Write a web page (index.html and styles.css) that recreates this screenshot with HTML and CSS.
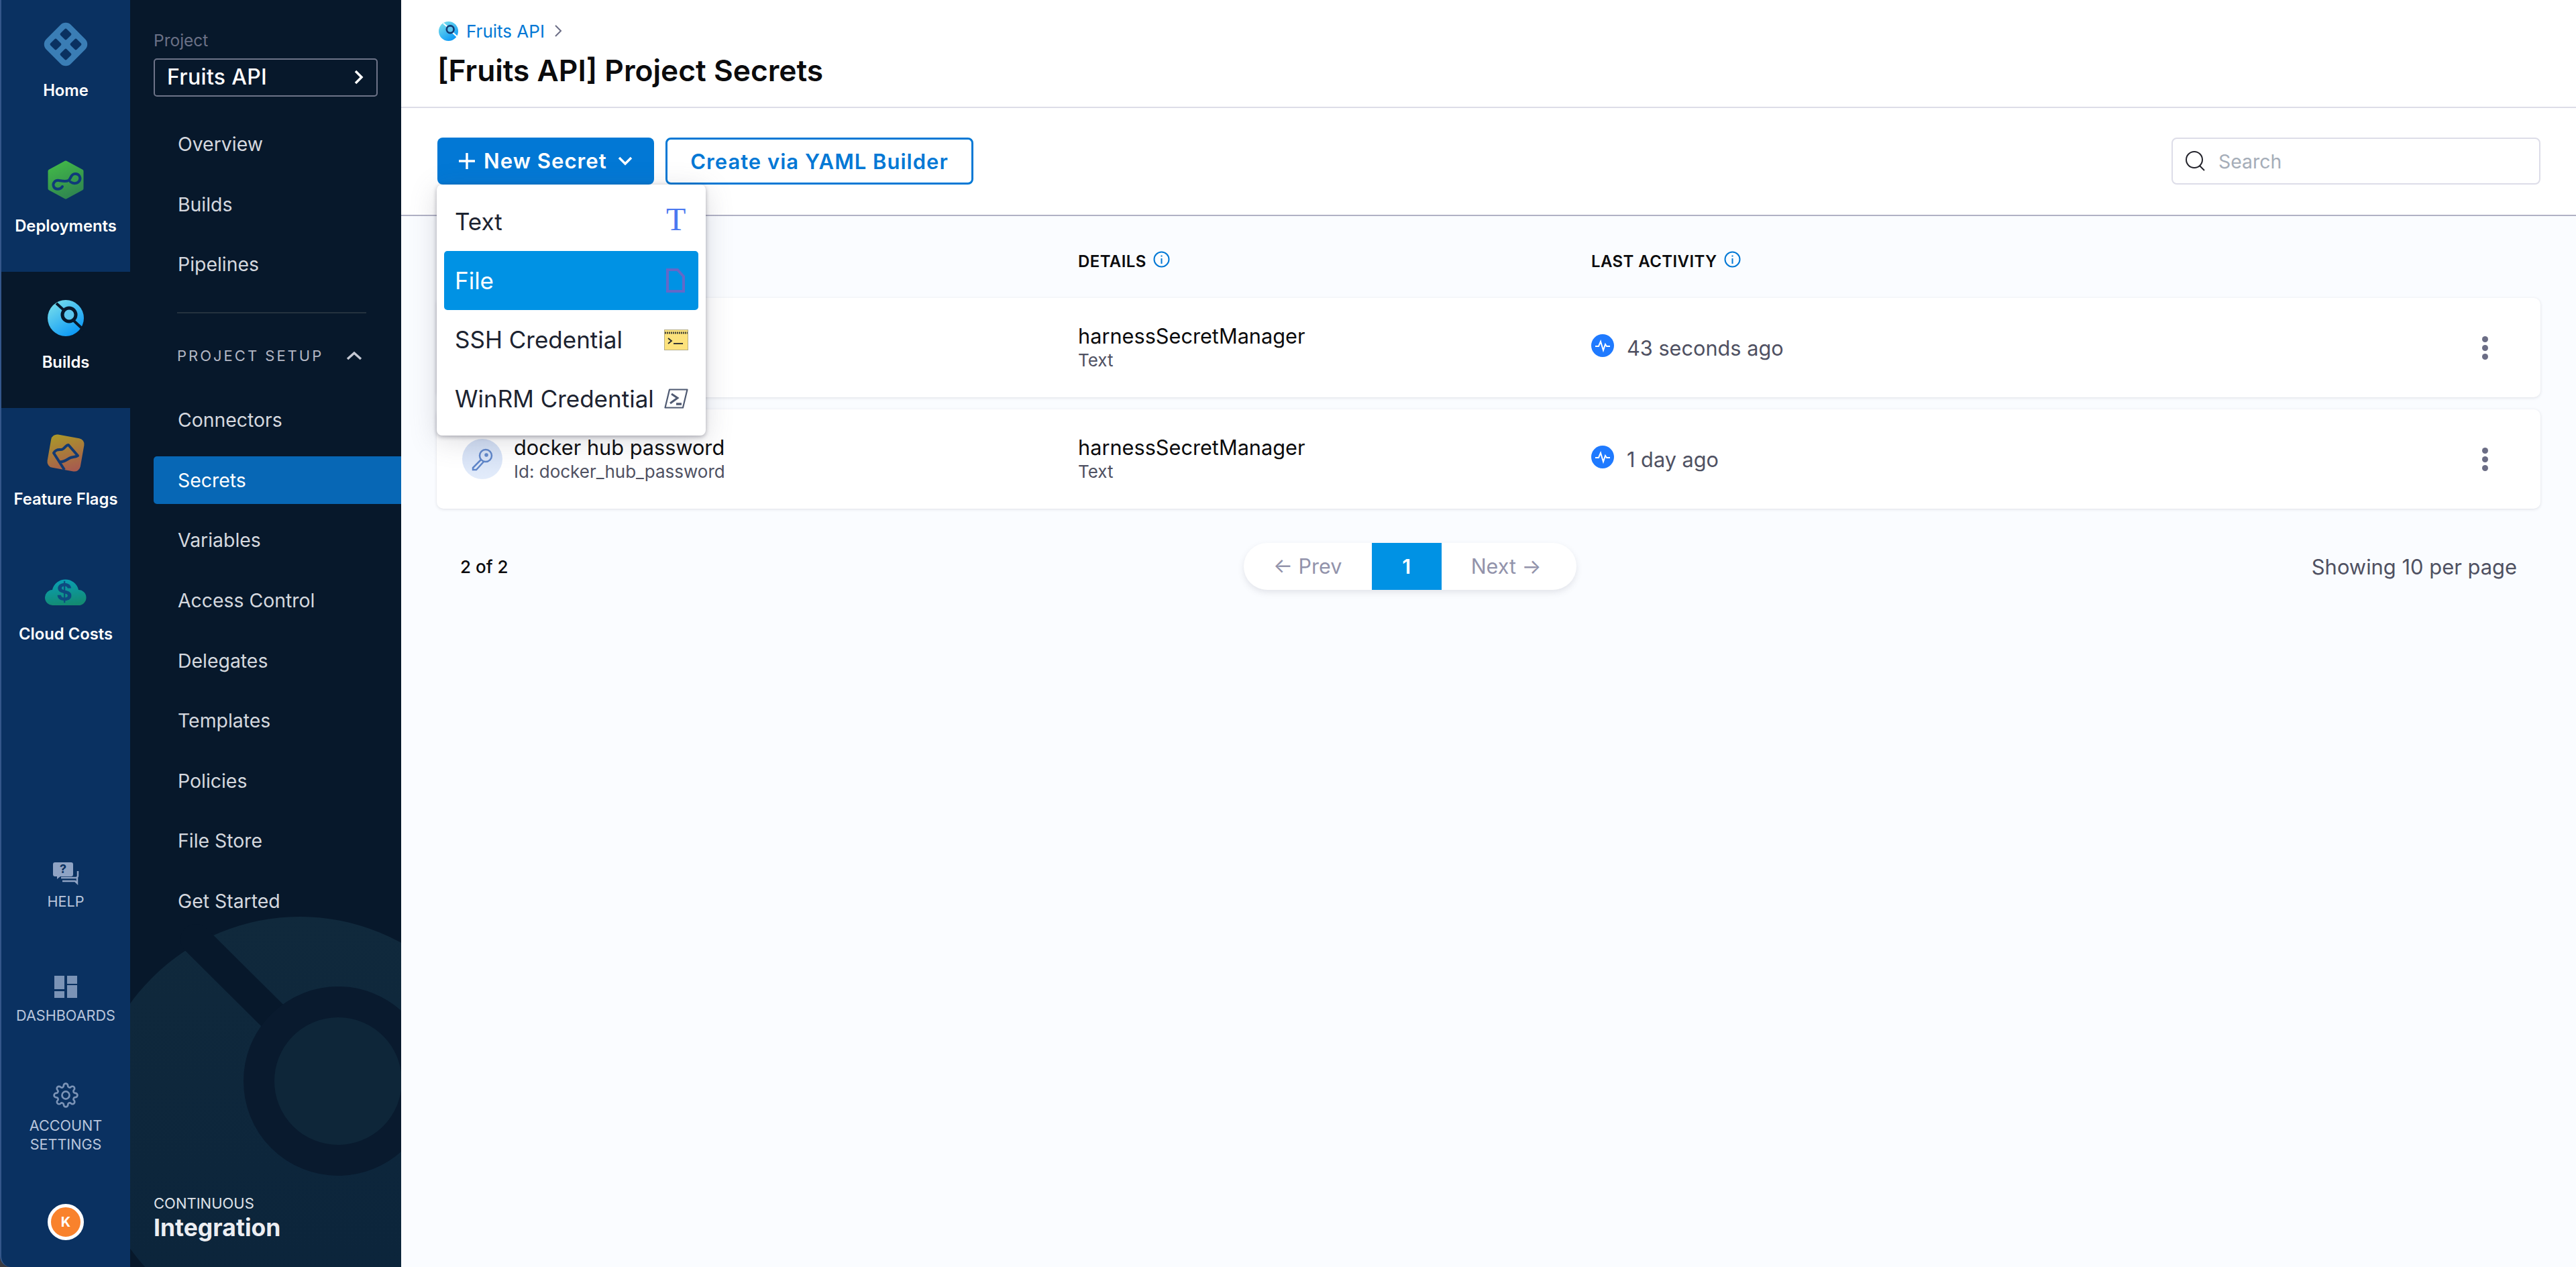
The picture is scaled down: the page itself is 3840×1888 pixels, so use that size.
FILE: index.html
```html
<!DOCTYPE html>
<html lang="en">
<head>
    <meta charset="UTF-8">
    <meta name="viewport" content="width=device-width, initial-scale=1.0">
    <title>Project Secrets</title>
    <link rel="stylesheet" href="styles.css">
</head>
<body>
    <aside class="rail">
        <a class="module">
            <svg class="module-icon" width="66" height="66" viewBox="0 0 66 66">
                <rect x="7" y="7" width="52" height="52" rx="11" fill="#3a7db5" transform="rotate(45 33 33)"/>
                <g fill="#0a3161">
                    <rect x="26.5" y="11.5" width="13" height="13" rx="2" transform="rotate(45 33 18)"/>
                    <rect x="26.5" y="41.5" width="13" height="13" rx="2" transform="rotate(45 33 48)"/>
                    <rect x="11.5" y="26.5" width="13" height="13" rx="2" transform="rotate(45 18 33)"/>
                    <rect x="41.5" y="26.5" width="13" height="13" rx="2" transform="rotate(45 48 33)"/>
                </g>
            </svg>
            <span>Home</span>
        </a>
        <a class="module">
            <svg class="module-icon" width="54" height="58" viewBox="0 0 54 58">
                <defs><linearGradient id="green" x1="0.3" y1="0" x2="0.7" y2="1"><stop offset="0" stop-color="#41b648"/><stop offset="1" stop-color="#2f8450"/></linearGradient></defs>
                <path d="M27 3 L51 16 V42 L27 55 L3 42 V16 Z" fill="url(#green)" stroke="url(#green)" stroke-width="5" stroke-linejoin="round"/>
                <path d="M22 39c-3 5-11 5-13 0s2-10 8-9 10 2 14 0 3-10 10-10 9 7 6 11-9 4-13 1" fill="none" stroke="#0f3a7a" stroke-width="4" stroke-linecap="round"/>
            </svg>
            <span>Deployments</span>
        </a>
        <a class="module active">
            <svg class="module-icon" width="54" height="54" viewBox="0 0 54 54">
                <defs><linearGradient id="cyan" x1="0.1" y1="0.1" x2="0.7" y2="1"><stop offset="0" stop-color="#74dcec"/><stop offset="1" stop-color="#0a98f6"/></linearGradient></defs>
                <circle cx="27" cy="27" r="27" fill="url(#cyan)"/>
                <path d="M13 5 L24 15 M38 30 L54 45" stroke="#07182b" stroke-width="4"/>
                <circle cx="32" cy="22" r="10" fill="#5cc6ee" stroke="#07182b" stroke-width="5"/>
            </svg>
            <span>Builds</span>
        </a>
        <a class="module">
            <svg class="module-icon" width="58" height="58" viewBox="0 0 58 58">
                <defs><linearGradient id="amber" x1="0.2" y1="0" x2="0.7" y2="1"><stop offset="0" stop-color="#aa962a"/><stop offset="1" stop-color="#a75c4e"/></linearGradient></defs>
                <rect x="4" y="4" width="50" height="50" rx="9" fill="url(#amber)" transform="rotate(10 29 29)"/>
                <path d="M27 54 L11 29 c5-8 10-3 14-6 s6-7 8-6 l14 16 c-5 3-8 1-13 4 s-9 6-15 5" fill="none" stroke="#123a72" stroke-width="4" stroke-linejoin="round"/>
            </svg>
            <span>Feature Flags</span>
        </a>
        <a class="module">
            <svg class="module-icon" width="62" height="44" viewBox="0 0 62 44">
                <defs><linearGradient id="teal" x1="0.4" y1="0" x2="0.6" y2="1"><stop offset="0" stop-color="#0a9fb4"/><stop offset="1" stop-color="#138a70"/></linearGradient></defs>
                <path d="M12 43 A11.500 11.500 0 0 1 11 20 A20 20 0 0 1 50 20 A11.500 11.500 0 0 1 50 43 Z" fill="url(#teal)"/>
                <text x="29" y="36" text-anchor="middle" class="cloud-dollar">$</text>
            </svg>
            <span>Cloud Costs</span>
        </a>

        <div class="rail-bottom">
            <a class="tool tool-help">
                <svg width="40" height="36" viewBox="0 0 40 36">
                    <path d="M13 24 H35 a3 3 0 0 0 3-3 V14" fill="none" stroke="#8fa3c4" stroke-width="2.500"/>
                    <path d="M15 29 H34 l3 3 V24" fill="none" stroke="#8fa3c4" stroke-width="2.500"/>
                    <path d="M4 1 H28 a3 3 0 0 1 3 3 V19 a3 3 0 0 1-3 3 H12 l-5 4 V22 H4 a3 3 0 0 1-3-3 V4 a3 3 0 0 1 3-3 Z" fill="#8fa3c4"/>
                    <text x="16" y="17" text-anchor="middle" class="help-mark">?</text>
                </svg>
                <span>HELP</span>
            </a>
            <a class="tool tool-dash">
                <svg width="34" height="33" viewBox="0 0 34 33" fill="#7b93b6">
                    <rect width="15" height="20"/><rect x="19" width="15" height="12"/>
                    <rect y="23" width="15" height="10"/><rect x="19" y="14" width="15" height="19"/>
                </svg>
                <span>DASHBOARDS</span>
            </a>
            <a class="tool tool-gear">
                <svg width="38" height="38" viewBox="0 0 24 24" fill="none" stroke="#7b93b6" stroke-width="1.700">
                    <circle cx="12" cy="12" r="3.500"/>
                    <path d="M19.4 15a1.65 1.65 0 0 0 .33 1.82l.06.06a2 2 0 0 1 0 2.83 2 2 0 0 1-2.83 0l-.06-.06a1.65 1.65 0 0 0-1.82-.33 1.65 1.65 0 0 0-1 1.51V21a2 2 0 0 1-2 2 2 2 0 0 1-2-2v-.09A1.65 1.65 0 0 0 9 19.4a1.65 1.65 0 0 0-1.82.33l-.06.06a2 2 0 0 1-2.83 0 2 2 0 0 1 0-2.83l.06-.06a1.65 1.65 0 0 0 .33-1.82 1.65 1.65 0 0 0-1.51-1H3a2 2 0 0 1-2-2 2 2 0 0 1 2-2h.09A1.65 1.65 0 0 0 4.6 9a1.65 1.65 0 0 0-.33-1.82l-.06-.06a2 2 0 0 1 0-2.83 2 2 0 0 1 2.83 0l.06.06a1.65 1.65 0 0 0 1.82.33H9a1.65 1.65 0 0 0 1-1.51V3a2 2 0 0 1 2-2 2 2 0 0 1 2 2v.09a1.65 1.65 0 0 0 1 1.51 1.65 1.65 0 0 0 1.82-.33l.06-.06a2 2 0 0 1 2.83 0 2 2 0 0 1 0 2.83l-.06.06a1.65 1.65 0 0 0-.33 1.82V9a1.65 1.65 0 0 0 1.51 1H21a2 2 0 0 1 2 2 2 2 0 0 1-2 2h-.09a1.65 1.65 0 0 0-1.51 1z"/>
                </svg>
                <span>ACCOUNT<br>SETTINGS</span>
            </a>
            <div class="avatar">K</div>
        </div>
    </aside>

    <nav class="sidenav">
        <svg class="watermark" width="404" height="560" viewBox="194 1328 404 560">
            <defs><linearGradient id="mark" x1="0" y1="0" x2="0" y2="1"><stop offset="0" stop-color="#10293c"/><stop offset="1" stop-color="#0b243b"/></linearGradient></defs>
            <circle cx="447" cy="1678" r="312" fill="url(#mark)"/>
            <path d="M292 1400 L445 1552" stroke="#07182b" stroke-width="46" stroke-linecap="round"/>
            <circle cx="504" cy="1611" r="118" fill="#0e2639" stroke="#091a2e" stroke-width="46"/>
        </svg>

        <div class="project-label">Project</div>
        <div class="project-box">
            <span>Fruits API</span>
            <svg width="16" height="24" viewBox="0 0 16 24" fill="none" stroke="#fff" stroke-width="3.500"><path d="M3 3 L12 12 L3 21"/></svg>
        </div>

        <a class="nav-item first">Overview</a>
        <a class="nav-item">Builds</a>
        <a class="nav-item">Pipelines</a>
        <div class="nav-divider"></div>
        <div class="nav-section">
            <span>PROJECT SETUP</span>
            <svg width="24" height="16" viewBox="0 0 24 16" fill="none" stroke="#c5c8d3" stroke-width="3.500"><path d="M2 13 L12 4 L22 13"/></svg>
        </div>
        <a class="nav-item">Connectors</a>
        <a class="nav-item selected">Secrets</a>
        <a class="nav-item">Variables</a>
        <a class="nav-item">Access Control</a>
        <a class="nav-item">Delegates</a>
        <a class="nav-item">Templates</a>
        <a class="nav-item">Policies</a>
        <a class="nav-item">File Store</a>
        <a class="nav-item">Get Started</a>

        <div class="module-name">
            <div class="module-kicker">CONTINUOUS</div>
            <div class="module-title">Integration</div>
        </div>
    </nav>

    <main class="main">
        <header class="page-header">
            <div class="crumbs">
                <svg width="29" height="29" viewBox="0 0 54 54">
                    <defs><linearGradient id="cyan2" x1="0.1" y1="0.1" x2="0.7" y2="1"><stop offset="0" stop-color="#74dcec"/><stop offset="1" stop-color="#0a98f6"/></linearGradient></defs>
                    <circle cx="27" cy="27" r="27" fill="url(#cyan2)"/>
                    <path d="M13 5 L24 15 M38 30 L54 45" stroke="#fff" stroke-width="4"/>
                    <circle cx="32" cy="22" r="10" fill="#5cc6ee" stroke="#123a72" stroke-width="5"/>
                </svg>
                <a>Fruits API</a>
                <svg width="12" height="20" viewBox="0 0 12 20" fill="none" stroke="#6b6d85" stroke-width="2"><path d="M2 2 L10 10 L2 18"/></svg>
            </div>
            <h1>[Fruits API] Project Secrets</h1>
        </header>

        <div class="toolbar">
            <div class="new-wrap">
                <button class="btn btn-primary">
                    <svg width="30" height="30" viewBox="0 0 30 30" stroke="#fff" stroke-width="3.500"><path d="M15 3 V27 M3 15 H27"/></svg>
                    <span>New Secret</span>
                    <svg class="caret" width="22" height="14" viewBox="0 0 22 14" fill="none" stroke="#fff" stroke-width="3.500"><path d="M2 2 L11 11 L20 2"/></svg>
                </button>
                <div class="menu">
                    <div class="menu-item"><span>Text</span><span class="icon-t">T</span></div>
                    <div class="menu-item hover">
                        <span>File</span>
                        <svg class="menu-icon" width="28" height="36" viewBox="0 0 28 36" fill="none" stroke="#6468c8" stroke-width="4"><path d="M2 2 H17 L26 12 V34 H2 Z"/></svg>
                    </div>
                    <div class="menu-item">
                        <span>SSH Credential</span>
                        <svg class="menu-icon wide" width="36" height="31" viewBox="0 0 36 31">
                            <rect x="0.500" y="0.500" width="35" height="30" fill="#fce27c" stroke="#b5ad86"/>
                            <path d="M1 5 H35" stroke="#4a4a3a" stroke-width="3" stroke-dasharray="2 1"/>
                            <path d="M6 13 L11 17 L6 21" fill="none" stroke="#22262e" stroke-width="1.800"/>
                            <path d="M14 21 H28" stroke="#22262e" stroke-width="1.800"/>
                        </svg>
                    </div>
                    <div class="menu-item">
                        <span>WinRM Credential</span>
                        <svg class="menu-icon wide" width="36" height="30" viewBox="0 0 36 30" fill="none" stroke="#4f5a72">
                            <path d="M8 1.500 H34.500 L28 28.500 H1.500 Z" stroke-width="2.200" stroke-linejoin="round"/>
                            <path d="M11 8 L20 14 L9 22" stroke-width="3"/>
                            <path d="M18 23 H26" stroke-width="3.500"/>
                        </svg>
                    </div>
                </div>
            </div>
            <button class="btn btn-outline">Create via YAML Builder</button>
            <div class="search">
                <svg width="32" height="32" viewBox="0 0 32 32" fill="none" stroke="#22222a" stroke-width="2"><circle cx="14" cy="14" r="12"/><path d="M22 23 L29 30"/></svg>
                <span>Search</span>
            </div>
        </div>

        <section class="content">
            <div class="table-head">
                <div></div>
                <div class="th">DETAILS <svg width="25" height="25" viewBox="0 0 25 25"><circle cx="12.500" cy="12.500" r="11" fill="none" stroke="#0278d5" stroke-width="2"/><path d="M12.500 11 V19 M12.500 6.500 V8.500" stroke="#0278d5" stroke-width="2"/></svg></div>
                <div class="th">LAST ACTIVITY <svg width="25" height="25" viewBox="0 0 25 25"><circle cx="12.500" cy="12.500" r="11" fill="none" stroke="#0278d5" stroke-width="2"/><path d="M12.500 11 V19 M12.500 6.500 V8.500" stroke="#0278d5" stroke-width="2"/></svg></div>
            </div>

            <div class="row">
                <div class="cell-name"></div>
                <div>
                    <div class="row-title">harnessSecretManager</div>
                    <div class="row-sub">Text</div>
                </div>
                <div class="activity">
                    <svg width="34" height="34" viewBox="0 0 34 34"><circle cx="17" cy="17" r="17" fill="#1f7aff"/><path d="M6 18 H11 L14 11 L18 24 L21 15 L23 18 H28" fill="none" stroke="#fff" stroke-width="2"/></svg>
                    <span>43 seconds ago</span>
                </div>
                <div class="dots"><i></i><i></i><i></i></div>
            </div>

            <div class="row">
                <div class="cell-name">
                    <div class="key-badge">
                        <svg width="36" height="36" viewBox="0 0 36 36" fill="none" stroke="#5f86c9" stroke-width="2.500"><circle cx="23" cy="13" r="9"/><circle cx="24" cy="12" r="1.500"/><path d="M16 19 L4 31 V34 H9 L20 22"/></svg>
                    </div>
                    <div>
                        <div class="row-title">docker hub password</div>
                        <div class="row-sub">Id: docker_hub_password</div>
                    </div>
                </div>
                <div>
                    <div class="row-title">harnessSecretManager</div>
                    <div class="row-sub">Text</div>
                </div>
                <div class="activity">
                    <svg width="34" height="34" viewBox="0 0 34 34"><circle cx="17" cy="17" r="17" fill="#1f7aff"/><path d="M6 18 H11 L14 11 L18 24 L21 15 L23 18 H28" fill="none" stroke="#fff" stroke-width="2"/></svg>
                    <span>1 day ago</span>
                </div>
                <div class="dots"><i></i><i></i><i></i></div>
            </div>

            <div class="pager-row">
                <div class="pager-count">2 of 2</div>
                <div class="pager">
                    <a class="page-link prev">&larr; Prev</a>
                    <a class="page-num">1</a>
                    <a class="page-link next">Next &rarr;</a>
                </div>
                <div class="pager-size">Showing 10 per page</div>
            </div>
        </section>
    </main>
</body>
</html>
```

FILE: styles.css
```css
* {
    box-sizing: border-box;
}
html, body {
    height: 100%;
}
body {
    margin: 0;
    display: flex;
    height: 1888px;
    overflow: hidden;
    font-family: Inter, "Noto Sans", sans-serif;
    background: #3a3a3f;
    color: #0b0b0d;
}

/* module rail */
.rail {
    width: 194px;
    flex: none;
    display: flex;
    flex-direction: column;
    background: #0a3161;
    border-left: 2px solid #34568a;
    border-bottom-left-radius: 16px;
}
.module {
    height: 203px;
    display: flex;
    flex-direction: column;
    align-items: center;
    color: #fff;
    font-size: 23.800px;
    font-weight: 600;
}
.module:first-child {
    height: 202px;
}
.module.active {
    background: #07182b;
}
.module-icon {
    height: 66px;
    margin-top: 33px;
    margin-bottom: 21px;
}
.module:nth-child(2) .module-icon {
    margin-top: 33px;
    margin-bottom: 21px;
}
.module:nth-child(3) .module-icon {
    margin-top: 36px;
    margin-bottom: 18px;
}
.module:nth-child(4) .module-icon {
    margin-top: 34px;
    margin-bottom: 21px;
}
.module:nth-child(5) .module-icon {
    margin-top: 37px;
    margin-bottom: 16px;
}
.cloud-dollar {
    font-family: Inter, sans-serif;
    font-size: 36px;
    font-weight: 700;
    fill: #0e4a80;
}
.rail-bottom {
    margin-top: auto;
    display: flex;
    flex-direction: column;
    align-items: center;
}
.tool {
    display: flex;
    flex-direction: column;
    align-items: center;
    text-align: center;
    color: #b9c6dc;
    font-size: 21.600px;
    line-height: 28px;
}
.tool svg {
    display: block;
    margin-bottom: 12px;
}
.tool-help svg {
    margin-bottom: 9px;
}
.tool-help {
    margin-bottom: 97px;
}
.tool-dash {
    margin-bottom: 86px;
}
.help-mark {
    font-family: Inter, sans-serif;
    font-size: 18px;
    font-weight: 700;
    fill: #0a3161;
}
.avatar {
    width: 54px;
    height: 54px;
    margin: 75px 0 40px;
    border: 5px solid #fff;
    border-radius: 50%;
    background: #f9822c;
    color: #fff;
    font-size: 20px;
    font-weight: 700;
    line-height: 44px;
    text-align: center;
}

/* project nav */
.sidenav {
    position: relative;
    width: 404px;
    flex: none;
    padding-left: 35px;
    background: #07182b;
    overflow: hidden;
}
.watermark {
    position: absolute;
    left: 0;
    bottom: 0;
}
.project-label {
    position: relative;
    margin-top: 46px;
    height: 28px;
    line-height: 28px;
    font-size: 24.500px;
    color: #6b7186;
}
.project-box {
    position: relative;
    display: flex;
    align-items: center;
    justify-content: space-between;
    width: 334px;
    height: 57px;
    margin-top: 13px;
    padding: 0 18px 2px 18px;
    border: 2px solid #6d7388;
    border-radius: 5px;
    color: #fff;
    font-size: 32px;
    font-weight: 500;
    letter-spacing: 0.300px;
}
.nav-item {
    position: relative;
    display: block;
    height: 71px;
    margin-bottom: 18.600px;
    padding-left: 36px;
    line-height: 71px;
    font-size: 28.400px;
    color: #d5d8df;
    border-radius: 5px 0 0 5px;
}
.nav-item.first {
    margin-top: 35px;
}
.nav-item.selected {
    background: #0767b5;
    color: #fff;
}
.nav-divider {
    position: relative;
    width: 282px;
    height: 2px;
    margin: 36px 0 0 35px;
    background: #24323f;
}
.nav-section {
    position: relative;
    display: flex;
    align-items: center;
    justify-content: space-between;
    width: 282px;
    height: 40px;
    margin: 43px 0 40px 35px;
    padding-right: 6px;
    font-size: 22px;
    letter-spacing: 3px;
    color: #b3b7c4;
}
.module-name {
    position: absolute;
    left: 35px;
    bottom: 36px;
    color: #dfe2e8;
}
.module-kicker {
    font-size: 22px;
    line-height: 30px;
}
.module-title {
    font-size: 35.500px;
    line-height: 44px;
    font-weight: 700;
    color: #eceef2;
}

/* main column */
.main {
    flex: 1;
    display: flex;
    flex-direction: column;
    background: #fafcff;
    min-width: 0;
}
.page-header {
    height: 161px;
    padding: 30px 0 0 54px;
    background: #fff;
    border-bottom: 2px solid #dddde8;
}
.crumbs {
    display: flex;
    align-items: center;
    gap: 12px;
    height: 32px;
    margin-left: 2px;
    font-size: 26px;
    color: #0278d5;
}
.crumbs svg:last-child {
    margin-left: 2px;
}
h1 {
    margin: 13px 0 0;
    font-size: 44.300px;
    line-height: 60px;
    font-weight: 600;
    color: #0b0b0d;
}
.toolbar {
    display: flex;
    align-items: flex-start;
    height: 161px;
    padding: 44px 53px 0 54px;
    background: #fff;
    border-bottom: 2px solid #b0b1c4;
}
.new-wrap {
    position: relative;
    margin-right: 17px;
}
.btn {
    display: flex;
    align-items: center;
    height: 70px;
    border-radius: 8px;
    font-family: inherit;
    font-size: 31.200px;
    font-weight: 600;
    letter-spacing: 1px;
}
.btn-primary {
    width: 323px;
    padding: 0 0 0 29px;
    border: none;
    background: #0278d5;
    color: #fff;
}
.btn-primary span {
    margin-left: 10px;
}
.btn-primary .caret {
    margin-left: 16px;
}
.btn-outline {
    width: 459px;
    justify-content: center;
    border: 3px solid #0278d5;
    background: #fff;
    color: #0278d5;
    font-size: 31px;
}
.search {
    display: flex;
    align-items: center;
    gap: 18px;
    width: 550px;
    height: 70px;
    margin-left: auto;
    padding-left: 18px;
    border: 2px solid #dddde8;
    border-radius: 8px;
    background: #fff;
    font-size: 28.400px;
    color: #a5adb8;
}

/* new secret dropdown */
.menu {
    position: absolute;
    top: 70px;
    left: -1px;
    z-index: 5;
    width: 401px;
    padding: 11px;
    background: #fff;
    border-radius: 8px;
    box-shadow: 0 2px 6px rgba(40, 41, 61, 0.35), 0 8px 40px rgba(96, 97, 112, 0.22);
}
.menu-item {
    display: flex;
    align-items: center;
    justify-content: space-between;
    height: 88px;
    padding: 0 20px 0 16px;
    border-radius: 5px;
    font-size: 35px;
    color: #1c2330;
}
.menu-item.hover {
    background: #0092e4;
    color: #fff;
}
.icon-t {
    width: 28px;
    margin-top: -6px;
    font-family: "Liberation Serif", serif;
    font-size: 48px;
    line-height: 48px;
    color: #4a78f0;
    text-align: center;
}
.menu-icon.wide {
    margin-right: -5px;
}

/* table */
.content {
    flex: 1;
    padding: 0 53px 0 53px;
}
.table-head,
.row {
    display: grid;
    grid-template-columns: 956px 765px 1fr 100px;
    align-items: center;
}
.table-head {
    height: 122px;
    padding-top: 12px;
}
.th {
    display: flex;
    align-items: center;
    gap: 10px;
    font-size: 24px;
    font-weight: 600;
    letter-spacing: 0.400px;
    color: #0b0b0d;
}
.th svg {
    margin-top: -6px;
}
.row {
    height: 148px;
    margin-bottom: 18px;
    background: #fff;
    border-radius: 10px;
    box-shadow: 0 1px 4px rgba(96, 97, 112, 0.18);
}
.cell-name {
    display: flex;
    align-items: center;
    gap: 17px;
    padding-left: 38px;
}
.key-badge {
    display: flex;
    align-items: center;
    justify-content: center;
    width: 60px;
    height: 60px;
    border-radius: 50%;
    background: linear-gradient(#cfdcf2, #e3ecfb);
}
.row-title {
    font-size: 30.700px;
    line-height: 38px;
    color: #0b0b0d;
}
.row-sub {
    font-size: 26px;
    line-height: 34px;
    color: #4f5162;
}
.activity {
    display: flex;
    align-items: center;
    gap: 19px;
    font-size: 30.700px;
    color: #4f5162;
}
.activity svg {
    margin-top: -6px;
}
.dots {
    display: flex;
    flex-direction: column;
    align-items: center;
    gap: 4px;
    margin-left: -65px;
}
.dots i {
    width: 9px;
    height: 9px;
    border-radius: 50%;
    background: #6b6d85;
}
.pager-row {
    display: flex;
    align-items: center;
    justify-content: space-between;
    height: 70px;
    margin-top: 51px;
    padding: 0 35px;
}
.pager-count {
    font-size: 26px;
    font-weight: 500;
}
.pager-size {
    font-size: 30.900px;
    color: #4f5162;
}
.pager {
    display: flex;
    height: 70px;
    background: #fff;
    border-radius: 35px;
    overflow: hidden;
    box-shadow: 0 4px 10px rgba(96, 97, 112, 0.15);
    font-size: 30.500px;
    line-height: 70px;
    color: #9293ab;
}
.page-link {
    display: block;
    width: 191px;
    text-align: center;
}
.page-link.next {
    width: 201px;
    padding-right: 8px;
}
.page-num {
    display: block;
    width: 104px;
    background: #0092e4;
    color: #fff;
    font-weight: 600;
    text-align: center;
}
```
